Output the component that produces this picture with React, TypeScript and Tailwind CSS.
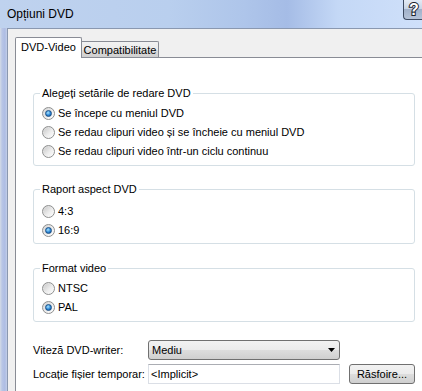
import React from "react";

function Radio({ label, checked }: { label: string; checked?: boolean }) {
  return (
    <div className="flex h-[19px] items-center gap-[3px]">
      <span className="flex h-[13px] w-[13px] items-center justify-center rounded-full border border-[#8e8f8f] bg-[linear-gradient(135deg,#d4d4d4,#f4f4f4_70%,#ffffff)]">
        {checked ? (
          <span className="h-[7px] w-[7px] rounded-full border border-[#1a4f86] bg-[radial-gradient(circle_at_40%_35%,#a9e4ff,#2a86d6_55%,#0f4585)]" />
        ) : (
          <span className="h-[9px] w-[9px] rounded-full bg-[linear-gradient(135deg,#cbcbcb,#eeeeee_60%,#fafafa)]" />
        )}
      </span>
      <span className="leading-[13px]">{label}</span>
    </div>
  );
}

function Group({
  title,
  pt,
  pb,
  children,
}: {
  title: string;
  pt: string;
  pb: string;
  children: React.ReactNode;
}) {
  return (
    <div className={`relative w-[382px] rounded-[3px] border border-[#d5dfe5] px-[8px] ${pt} ${pb}`}>
      <span className="absolute -top-[7px] left-[6px] bg-white px-[2px] leading-[13px]">{title}</span>
      {children}
    </div>
  );
}

export default function App() {
  return (
    <div
      className="flex h-[391px] w-[422px] flex-col overflow-hidden text-[11px] text-black"
      style={{ fontFamily: '"Liberation Sans", Arial, sans-serif' }}
    >
      {/* Title bar */}
      <div className="flex h-[28px] shrink-0 items-start justify-between bg-[linear-gradient(90deg,#bfd2ee_0%,#b9cfee_40%,#aec5ea_58%,#a5bce6_68%,#c4d8f6_80%,#cfe0fa_100%)]">
        <span className="pl-[7px] pt-[6px] text-[12px] leading-[16px] text-black">Opțiuni DVD</span>
        <div className="flex h-[20px] w-[19px] items-center justify-center rounded-bl-[4px] border-b border-l border-[#3c4960] bg-[linear-gradient(180deg,#e4ebf5_0%,#c9d5e6_45%,#a1b1ca_50%,#b5c3d8_100%)] pl-[2px]">
          <span className="text-[16px] font-bold leading-[16px] text-white [-webkit-text-stroke:2px_#1e2430] [paint-order:stroke_fill]">?</span>
        </div>
      </div>
      <div className="flex flex-1">
        {/* Left window frame */}
        <div className="w-[7px] shrink-0 bg-[linear-gradient(90deg,#d4dbe6_0%,#b8c6e6_30%,#aebde4_70%,#c3cfe8_100%)]" />
        {/* Client area */}
        <div className="flex flex-1 flex-col border-l border-t border-[#8a98b0] bg-[#f0f0f0] pl-[7px] pt-[8px]">
          {/* Tabs */}
          <div className="flex h-[20px] items-end">
            <div className="relative z-10 -mb-px flex h-[21px] w-[67px] items-center justify-center rounded-t-[2px] border border-b-0 border-[#898c95] bg-white pb-[1px]">
              DVD-Video
            </div>
            <div className="flex h-[16px] w-[77px] items-center justify-center rounded-tr-[2px] border-r border-t border-[#898c95] bg-[linear-gradient(180deg,#f2f2f2_0%,#ebebeb_50%,#dddddd_51%,#cfcfcf_100%)] pt-[1px]">
              Compatibilitate
            </div>
          </div>
          {/* Panel */}
          <div className="flex flex-1 flex-col border-l border-t border-[#898c95] bg-white pl-[17px] pt-[35px]">
            <Group title="Alegeți setările de redare DVD" pt="pt-[10px]" pb="pb-[4px]">
              <Radio label="Se începe cu meniul DVD" checked />
              <Radio label="Se redau clipuri video și se încheie cu meniul DVD" />
              <Radio label="Se redau clipuri video într-un ciclu continuu" />
            </Group>
            <div className="h-[23px]" />
            <Group title="Raport aspect DVD" pt="pt-[12px]" pb="pb-[3px]">
              <Radio label="4:3" />
              <Radio label="16:9" checked />
            </Group>
            <div className="h-[24px]" />
            <Group title="Format video" pt="pt-[10px]" pb="pb-[4px]">
              <Radio label="NTSC" />
              <Radio label="PAL" checked />
            </Group>
            {/* Bottom fields */}
            <div className="mt-[18px] flex h-[20px] items-center">
              <span className="w-[115px]">Viteză DVD-writer:</span>
              <div className="flex h-[20px] w-[192px] items-center justify-between rounded-[3px] border border-[#707070] bg-[linear-gradient(180deg,#f2f2f2_0%,#ebebeb_50%,#dddddd_51%,#cfcfcf_100%)] pl-[3px] pr-[4px]">
                <span>Mediu</span>
                <svg width="7" height="4" viewBox="0 0 7 4">
                  <path d="M0 0 H7 L3.5 4 Z" fill="#000" />
                </svg>
              </div>
            </div>
            <div className="mt-[4px] flex h-[20px] items-center">
              <span className="w-[115px]">Locație fișier temporar:</span>
              <div className="flex h-[20px] w-[192px] items-center border border-[#dbdfe6] border-t-[#abadb3] bg-white pl-[2px]">
                &lt;Implicit&gt;
              </div>
              <div className="ml-[9px] flex h-[20px] w-[66px] items-center justify-center rounded-[3px] border border-[#707070] bg-[linear-gradient(180deg,#f2f2f2_0%,#ebebeb_50%,#dddddd_51%,#cfcfcf_100%)]">
                Răsfoire...
              </div>
            </div>
          </div>
        </div>
      </div>
    </div>
  );
}
